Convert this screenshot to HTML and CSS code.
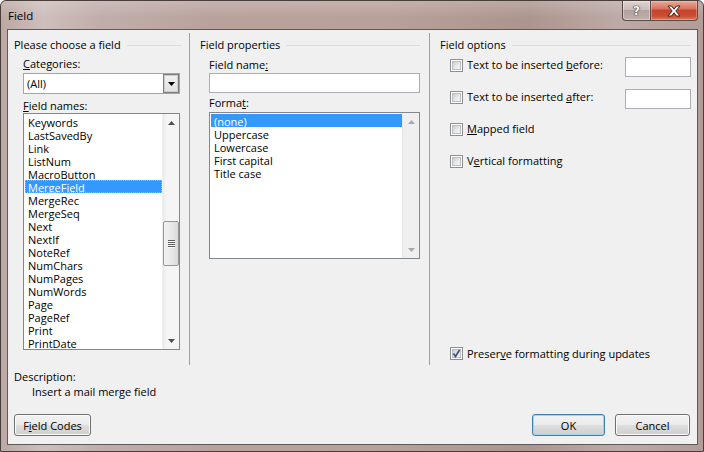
FILE: index.html
```html
<!DOCTYPE html>
<html>
<head>
<meta charset="utf-8">
<title>Field</title>
<link rel="stylesheet" href="styles.css">
</head>
<body>
<div class="window">
  <div class="titlebar">
    <span class="title">Field</span>
    <div class="caption-btns">
      <div class="cap-btn help">?</div>
      <div class="cap-btn close">
        <svg width="14" height="12" viewBox="0 0 14 12"><path d="M1 1h3.5L7 4.2 9.5 1H13L8.8 6 13 11H9.5L7 7.8 4.5 11H1l4.2-5z" fill="#fff" stroke="#3b2620" stroke-width="1"/></svg>
      </div>
    </div>
  </div>
  <div class="client">
    <div class="panes">
      <section class="pane pane-left">
        <div class="group-head"><span>Please choose a field</span><i class="rule"></i></div>
        <div class="field">
          <div class="label lbl-cat"><u>C</u>ategories:</div>
          <div class="combo">
            <span class="combo-val">(All)</span>
            <span class="combo-btn"><svg width="7" height="4" viewBox="0 0 7 4"><path d="M0 0h7L3.5 4z" fill="#000"/></svg></span>
          </div>
          <div class="label lbl-names"><u>F</u>ield names:</div>
          <div class="listbox names">
            <ul class="items">
              <li>Keywords</li>
              <li>LastSavedBy</li>
              <li>Link</li>
              <li>ListNum</li>
              <li>MacroButton</li>
              <li class="sel focus">MergeField</li>
              <li>MergeRec</li>
              <li>MergeSeq</li>
              <li>Next</li>
              <li>NextIf</li>
              <li>NoteRef</li>
              <li>NumChars</li>
              <li>NumPages</li>
              <li>NumWords</li>
              <li>Page</li>
              <li>PageRef</li>
              <li>Print</li>
              <li>PrintDate</li>
            </ul>
            <div class="vscroll">
              <span class="arrow"><svg width="7" height="4" viewBox="0 0 7 4"><path d="M3.5 0L7 4H0z" fill="#505050"/></svg></span>
              <div class="track">
                <div class="thumb"><i></i><i></i><i></i><i></i></div>
              </div>
              <span class="arrow"><svg width="7" height="4" viewBox="0 0 7 4"><path d="M0 0h7L3.5 4z" fill="#505050"/></svg></span>
            </div>
          </div>
        </div>
      </section>
      <section class="pane pane-mid">
        <div class="group-head"><span>Field properties</span><i class="rule"></i></div>
        <div class="field">
          <div class="label lbl-fname">Field name<u>:</u></div>
          <div class="textbox wide"></div>
          <div class="label lbl-format">Forma<u>t</u>:</div>
          <div class="listbox format">
            <ul class="items">
              <li class="sel">(none)</li>
              <li>Uppercase</li>
              <li>Lowercase</li>
              <li>First capital</li>
              <li>Title case</li>
            </ul>
            <div class="vscroll disabled">
              <span class="arrow"><svg width="7" height="4" viewBox="0 0 7 4"><path d="M3.5 0L7 4H0z" fill="#a8a8a8"/></svg></span>
              <div class="track"></div>
              <span class="arrow"><svg width="7" height="4" viewBox="0 0 7 4"><path d="M0 0h7L3.5 4z" fill="#a8a8a8"/></svg></span>
            </div>
          </div>
        </div>
      </section>
      <section class="pane pane-right">
        <div class="group-head"><span>Field options</span><i class="rule"></i></div>
        <div class="options">
          <div class="opt">
            <span class="cb"></span><span class="opt-text">Text to be inserted <u>b</u>efore:</span>
            <span class="textbox small"></span>
          </div>
          <div class="opt">
            <span class="cb"></span><span class="opt-text">Text to be inserted <u>a</u>fter:</span>
            <span class="textbox small"></span>
          </div>
          <div class="opt">
            <span class="cb"></span><span class="opt-text"><u>M</u>apped field</span>
          </div>
          <div class="opt">
            <span class="cb"></span><span class="opt-text">V<u>e</u>rtical formatting</span>
          </div>
        </div>
        <div class="opt preserve">
          <span class="cb checked"><svg width="9" height="9" viewBox="0 0 9 9"><path d="M1.5 4.5l2 3 4-6.5" fill="none" stroke="#3d5488" stroke-width="1.7"/></svg></span><span class="opt-text">Preser<u>v</u>e formatting during updates</span>
        </div>
      </section>
    </div>
    <div class="desc">
      <div>Description:</div>
      <div class="desc-text">Insert a mail merge field</div>
    </div>
    <div class="footer">
      <button class="btn codes">F<u>i</u>eld Codes</button>
      <div class="footer-right">
        <button class="btn ok default">OK</button>
        <button class="btn cancel">Cancel</button>
      </div>
    </div>
  </div>
</div>
</body>
</html>
```

FILE: styles.css
```css
* { box-sizing: border-box; }
html, body { margin: 0; padding: 0; }
body {
  width: 704px;
  height: 452px;
  overflow: hidden;
  background: #ffffff;
  font-family: "Open Sans", "Noto Sans", sans-serif;
  font-size: 11px;
  color: #000;
}
u { text-decoration: underline; text-underline-offset: 1px; }
ul { list-style: none; margin: 0; padding: 0; }

.window {
  width: 704px;
  height: 452px;
  border: 1px solid #4a3e3b;
  border-radius: 6px 6px 0 0;
  background: linear-gradient(to right, #bca8a4 0%, #cdbfbc 6%, #c1aeaa 14%, #b9a29d 30%, #b9a19b 55%, #ad958f 75%, #bda9a5 88%, #b29c97 100%);
  display: flex;
  flex-direction: column;
}
.titlebar {
  height: 28px;
  display: flex;
  justify-content: space-between;
  align-items: flex-start;
  padding: 0 5px 0 7px;
  background: linear-gradient(rgba(255,255,255,0.18), rgba(255,255,255,0) 60%);
  border-radius: 5px 5px 0 0;
}
.title {
  font-size: 11.5px;
  line-height: 28px;
  padding-top: 1px;
  color: #000;
}
.caption-btns { display: flex; }
.cap-btn {
  height: 20px;
  display: flex;
  align-items: center;
  justify-content: center;
  border: 1px solid #5b4c48;
  border-top: none;
}
.cap-btn.help {
  width: 28px;
  border-right: none;
  border-radius: 0 0 0 4px;
  background: linear-gradient(#ddd4d2 0%, #c9bcb9 45%, #b3a19c 50%, #bfb0ac 100%);
  box-shadow: inset 0 0 0 1px rgba(255,255,255,0.35);
  color: #fff;
  font-family: "DejaVu Sans", sans-serif;
  font-weight: bold;
  font-size: 12px;
  text-shadow: 0 0 1px #2a2a2a, 0 0 1px #2a2a2a, 0 0 1px #2a2a2a;
}
.cap-btn.close {
  width: 48px;
  border-radius: 0 0 4px 0;
  background: linear-gradient(#e9a898 0%, #d8745f 40%, #c5432b 50%, #cc4e34 80%, #e07a5a 100%);
  box-shadow: inset 0 0 0 1px rgba(255,220,210,0.35);
}

.client {
  width: 691px;
  height: 416px;
  margin: 0 5px 6px 6px;
  border: 1px solid #5f5a59;
  background: #f0f0f0;
  display: flex;
  flex-direction: column;
}

.panes {
  margin-top: 3px;
  height: 332px;
  display: flex;
}
.pane {
  padding-top: 4px;
  display: flex;
  flex-direction: column;
}
.pane-left { width: 182px; border-right: 1px solid #a0a0a0; padding-left: 6px; padding-right: 8px; }
.pane-mid { width: 240px; border-right: 1px solid #a0a0a0; padding-left: 10px; padding-right: 9px; }
.pane-right { flex: 1; padding-left: 10px; padding-right: 6px; padding-bottom: 2px; }

.group-head {
  display: flex;
  align-items: center;
  gap: 6px;
  height: 15px;
  line-height: 15px;
  white-space: nowrap;
}
.group-head .rule {
  flex: 1;
  height: 1px;
  background: #d5dde3;
  margin-top: 1px;
}

.field { padding-left: 9px; display: flex; flex-direction: column; }
.label { height: 15px; line-height: 15px; }
.lbl-cat { margin-top: 4px; }
.lbl-names { margin-top: 4px; }
.lbl-fname { margin-top: 5px; }
.lbl-format { margin-top: 2px; }

.combo {
  margin-top: 2px;
  width: 157px;
  height: 21px;
  border: 1px solid #a5a5a5;
  background: #fff;
  display: flex;
  align-items: stretch;
}
.combo-val { flex: 1; padding-left: 3px; line-height: 19px; }
.combo-btn {
  width: 16px;
  border: 1px solid #7c7c7c;
  box-shadow: inset 0 0 0 1px #cfcfcf;
  background: linear-gradient(#f1f1f1, #e1e1e1);
  display: flex;
  align-items: center;
  justify-content: center;
}

.textbox {
  display: block;
  height: 20px;
  border: 1px solid #abadb3;
  background: #fff;
}
.textbox.wide { margin-top: 1px; width: 211px; }
.textbox.small { width: 66px; margin-left: auto; }

.listbox {
  display: flex;
  border: 1px solid #828790;
  background: #fff;
}
.listbox.names { width: 157px; height: 237px; margin-top: 0; }
.listbox.format { width: 211px; height: 147px; margin-top: 2px; }
.items { flex: 1; padding-top: 1px; }
.items li {
  height: 13px;
  line-height: 15px;
  padding-left: 3px;
  margin-left: 1px;
  white-space: nowrap;
}
.items li.sel { background: #3399ff; color: #fff; }
.items li.focus { outline: 1px dotted #d9b070; outline-offset: -1px; }

.vscroll {
  width: 17px;
  display: flex;
  flex-direction: column;
  background: linear-gradient(to right, #e9e9e9, #f5f5f5 20%, #f5f5f5);
  border-left: 1px solid #f0f0f0;
}
.vscroll .arrow {
  height: 17px;
  display: flex;
  align-items: center;
  justify-content: center;
}
.vscroll .track { flex: 1; display: flex; flex-direction: column; }
.names .track { padding-top: 90px; }
.thumb {
  width: 16px;
  height: 45px;
  border: 1px solid #979797;
  border-radius: 2px;
  background: linear-gradient(to right, #f3f3f3, #e9e9e9 50%, #d9d9d9);
  display: flex;
  flex-direction: column;
  align-items: center;
  justify-content: center;
  gap: 1px;
}
.thumb i {
  display: block;
  width: 7px;
  height: 1px;
  background: #5d5d5d;
  box-shadow: 0 1px 0 #fafafa;
}
.vscroll.disabled { background: #efefef; border-left: 1px solid #e6e6e6; }

.options {
  margin-top: 5px;
  padding-left: 10px;
  display: flex;
  flex-direction: column;
  gap: 12px;
}
.opt {
  height: 20px;
  display: flex;
  align-items: flex-start;
}
.opt .cb { margin-top: 2px; }
.opt-text { margin-left: 4px; white-space: nowrap; line-height: 15px; }
.opt.preserve { margin-top: auto; padding-left: 10px; align-items: center; }
.opt.preserve .cb { margin-top: 0; }

.cb {
  width: 13px;
  height: 13px;
  flex: none;
  border: 1px solid #8e8f8f;
  background: #fff;
  padding: 1px;
  display: grid;
}
.cb::before {
  content: "";
  grid-area: 1 / 1;
  border: 1px solid #b9bcc0;
  background: linear-gradient(135deg, #cdd0d4, #eeeff0 70%, #f6f6f6);
}
.cb svg { grid-area: 1 / 1; position: relative; z-index: 1; }

.desc {
  margin-top: 4px;
  padding-left: 6px;
  line-height: 15px;
}
.desc-text { padding-left: 18px; }

.footer {
  margin-top: 15px;
  padding: 0 7px 0 6px;
  display: flex;
  justify-content: space-between;
}
.footer-right { display: flex; gap: 10px; }
.btn {
  height: 22px;
  margin: 0;
  padding: 0;
  font-family: "Open Sans", "Noto Sans", sans-serif;
  font-size: 11px;
  color: #000;
  border: 1px solid #707070;
  border-radius: 3px;
  background: linear-gradient(#f2f2f2 0%, #ebebeb 48%, #dddddd 52%, #cfcfcf 100%);
  box-shadow: inset 0 0 0 1px #fbfbfb;
}
.btn.codes { width: 77px; }
.btn.ok { width: 73px; }
.btn.cancel { width: 75px; }
.btn.default {
  border-color: #3c7fb1;
  box-shadow: inset 0 0 0 1px #9fd4f3;
}
```
